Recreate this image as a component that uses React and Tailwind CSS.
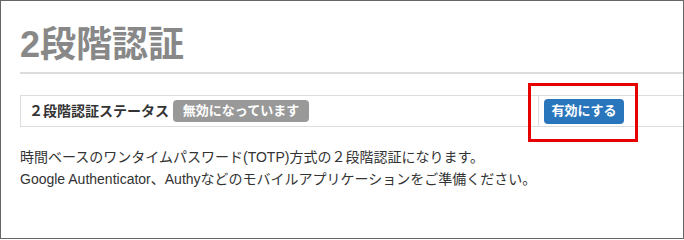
export default function App() {
  const font = { fontFamily: '"Liberation Sans", "Noto Sans CJK JP", sans-serif' };
  return (
    <div
      className="relative w-[684px] h-[239px] border border-[#666] overflow-hidden bg-white text-[#333]"
      style={font}
    >
      <div className="pl-[19px] w-[760px]">
        <h1 className="mt-[24px] text-[36px] leading-[40px] font-semibold text-[#888] pb-[7px] border-b-2 border-[#ddd]">
          2段階認証
        </h1>
        <div className="mt-[21px] flex h-[32px] border-y border-l border-[#ddd]">
          <div className="w-[517px] flex items-center pl-[8px] gap-[4px]">
            <span className="text-[14px] font-bold text-[#333]">２段階認証ステータス</span>
            <span className="inline-flex items-center justify-center w-[136px] h-[22px] rounded-[4px] bg-[#999] text-white text-[13px] font-bold">
              無効になっています
            </span>
          </div>
          <div className="w-[220px] border-l border-[#ddd] pl-[5px] flex items-center">
            <button className="w-[80px] h-[25px] rounded-[4px] bg-[#2a76bd] text-white text-[13px] font-bold flex items-center justify-center">
              有効にする
            </button>
          </div>
        </div>
        <div className="mt-[19px] text-[14px] leading-[22px] text-[#333]">
          <p>時間ベースのワンタイムパスワード(TOTP)方式の２段階認証になります。</p>
          <p>Google Authenticator、Authyなどのモバイルアプリケーションをご準備ください。</p>
        </div>
      </div>
      <div className="absolute left-[527px] top-[82px] w-[110px] h-[59px] border-[3px] border-[#e60000]" />
    </div>
  );
}
